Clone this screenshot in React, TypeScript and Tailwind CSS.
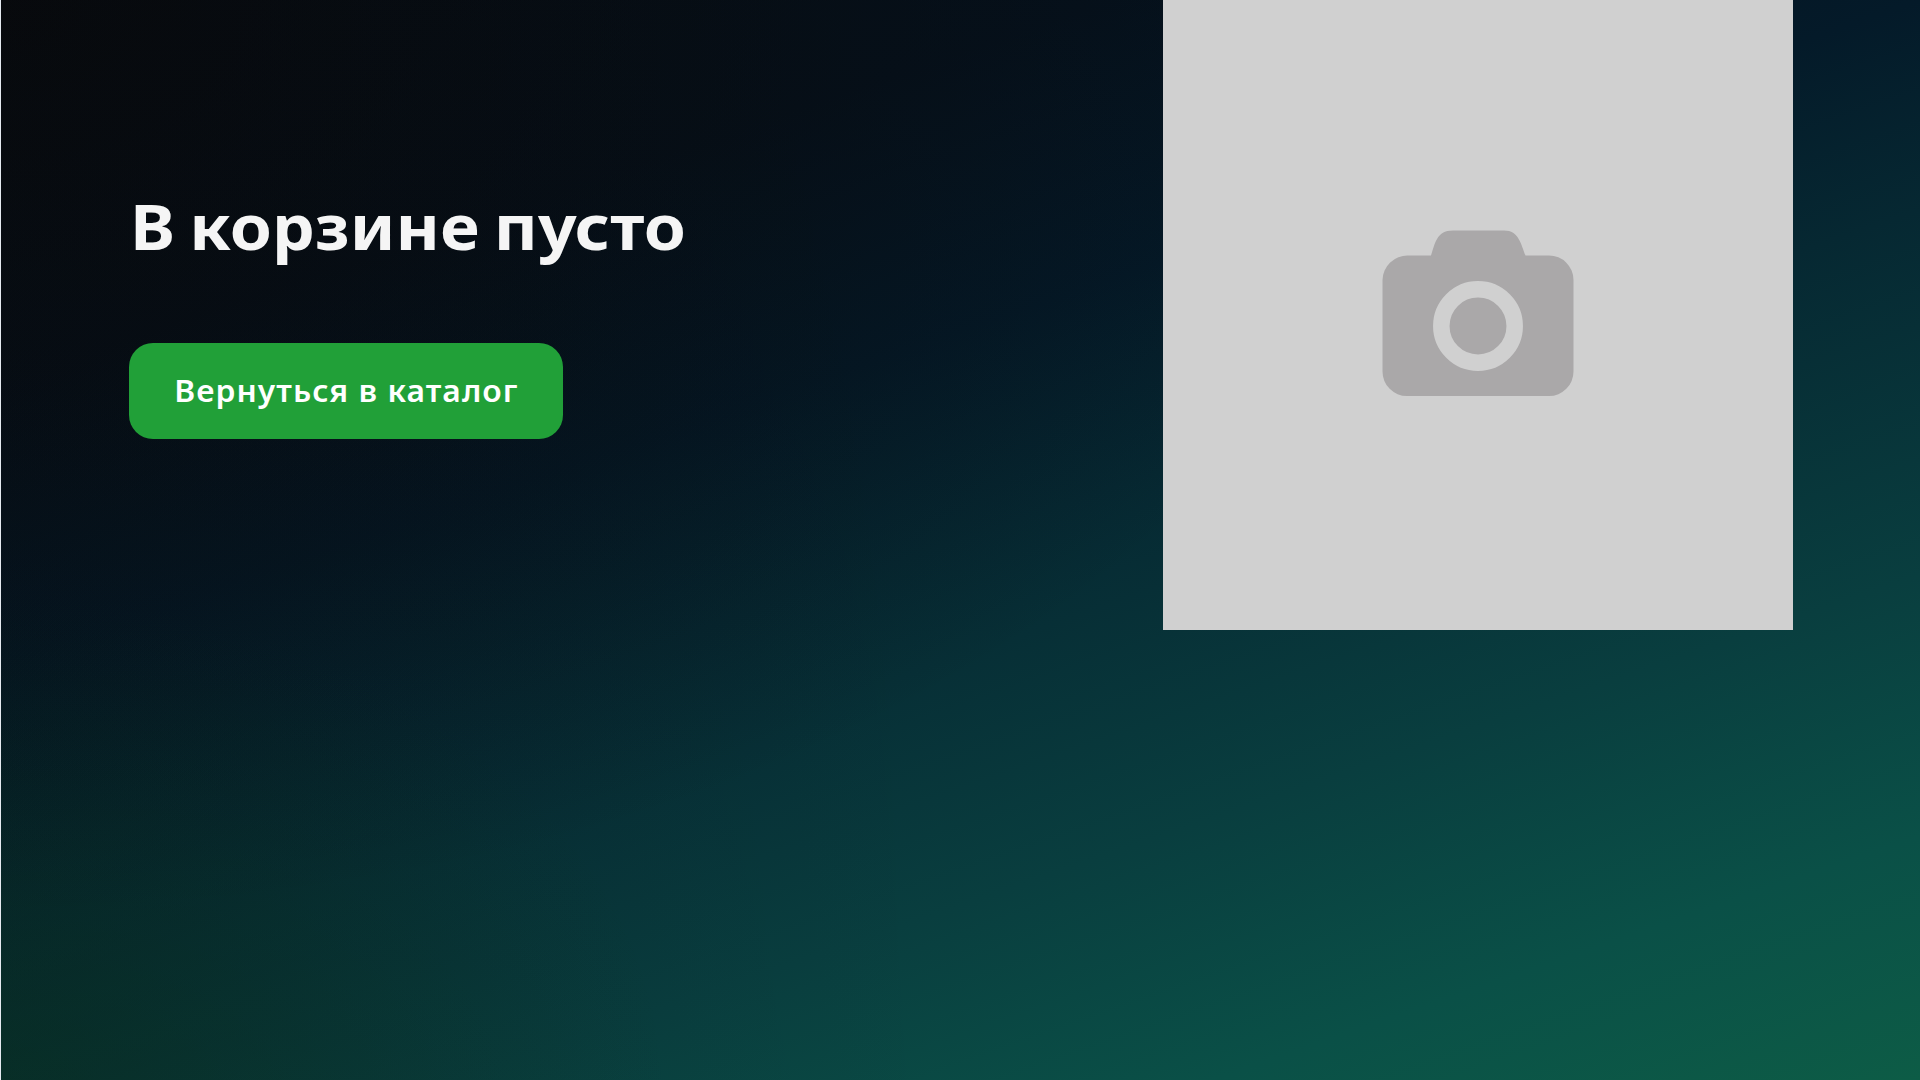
export default function App() {
  return (
    <main className="flex h-screen w-screen overflow-hidden bg-[#e5eaf0] pl-px font-['Noto_Sans',sans-serif]">
      <div className="flex h-full w-full items-start justify-between bg-[radial-gradient(35%_45%_at_0%_100%,rgba(8,44,20,0.4),rgba(8,44,20,0)),linear-gradient(90deg,rgba(8,8,10,0.12)_0%,rgba(8,8,10,0)_50%),radial-gradient(75%_85%_at_0%_0%,rgba(8,8,10,0.8),rgba(8,8,10,0)),linear-gradient(161deg,#05101a_0%,#05121e_22%,#041a29_38%,#062832_50%,#093e3f_71%,#0a5047_86%,#0d5c46_100%)] pr-[127px] pl-32">
        <section className="flex flex-col items-start pt-[182px]">
          <h1 className="ml-px origin-left scale-x-[1.076] text-[63px] leading-[88px] font-bold whitespace-nowrap text-[#f5f5f5] [word-spacing:-3px]">
            В корзине пусто
          </h1>
          <button className="mt-[73px] flex h-24 w-[434px] items-center justify-center rounded-3xl bg-[#21a038] text-[30px] font-semibold tracking-[1px] whitespace-nowrap text-white">
            <span className="scale-x-[1.06] pb-px">Вернуться в каталог</span>
          </button>
        </section>
        <div className="flex size-[630px] items-center justify-center bg-[#d0d0d0]">
          <svg className="h-[630px] w-[630px]" viewBox="1163 0 630 630">
            <path
              fill="#aaa8a9"
              d="M1408 255.5h23c4-11 5-25 22-25h51c15 0 17 14 21.500 25H1549a24.500 24.500 0 0 1 24.500 24.500v91.500a24.500 24.500 0 0 1-24.500 24.500h-142a24.500 24.500 0 0 1-24.500-24.500V280a25 25 0 0 1 25.500-24.500z"
            />
            <circle cx="1478" cy="326" r="36.700" fill="none" stroke="#d0d0d0" strokeWidth="16.500" />
          </svg>
        </div>
      </div>
    </main>
  );
}
